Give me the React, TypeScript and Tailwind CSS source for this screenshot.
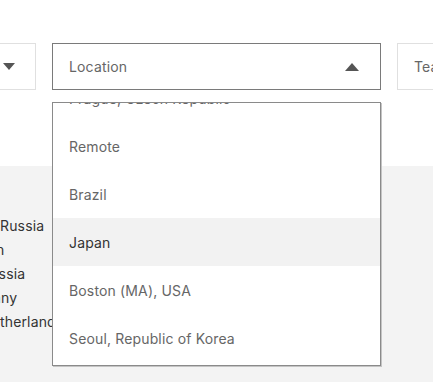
import React from "react";

const items = [
  "Prague, Czech Republic",
  "Remote",
  "Brazil",
  "Japan",
  "Boston (MA), USA",
  "Seoul, Republic of Korea",
];

function Down() {
  return (
    <svg width="12" height="7" viewBox="0 0 12 7">
      <path d="M0 0 H12 L6 7 Z" fill="#555" />
    </svg>
  );
}
function Up() {
  return (
    <svg width="14" height="8" viewBox="0 0 14 8">
      <path d="M0 8 H14 L7 0 Z" fill="#555" />
    </svg>
  );
}

export default function App() {
  return (
    <div className="w-[433px] h-[390px] overflow-hidden bg-white relative tracking-[0.15px]" style={{ fontFamily: "Inter, 'Noto Sans', sans-serif" }}>
      <div className="h-[166px] pt-[43px]">
        <div className="flex gap-4 ml-[-294px]">
          <div className="w-[330px] h-[47px] border border-[#e0e0e0] flex items-center justify-end pr-[20px] shrink-0">
            <Down />
          </div>
          <div className="relative w-[329px] h-[47px] border border-[#7a7a7a] flex items-center justify-between pl-4 pr-[21px] shrink-0">
            <span className="text-[14px] text-[#666]">Location</span>
            <Up />
            <div className="absolute left-[-1px] top-[58px] w-[329px] h-[264px] bg-white border border-[#8a8a8a] shadow-[1px_1px_0_#c4c4c4] overflow-hidden z-10">
              <div className="mt-[-29px]">
                {items.map((it) => (
                  <div
                    key={it}
                    className={`h-12 flex items-center pl-4 text-[14px] ${it === "Japan" ? "bg-[#f2f2f2] text-[#333]" : "text-[#666]"}`}
                  >
                    {it}
                  </div>
                ))}
              </div>
            </div>
          </div>
          <div className="w-[200px] h-[47px] border border-[#e0e0e0] flex items-center pl-4 shrink-0">
            <span className="text-[14px] text-[#666]">Team</span>
          </div>
        </div>
      </div>
      <div className="h-[216px] bg-[#f3f3f3] pt-[48px] text-[14px] leading-6 text-[#333] whitespace-nowrap">
        <div className="ml-[0px]">Russia</div>
        <div className="ml-[-37px]">Japan</div>
        <div className="ml-[-19px]">Russia</div>
        <div className="ml-[-44px]">Germany</div>
        <div className="ml-[-19px]">Netherlands</div>
      </div>
    </div>
  );
}
